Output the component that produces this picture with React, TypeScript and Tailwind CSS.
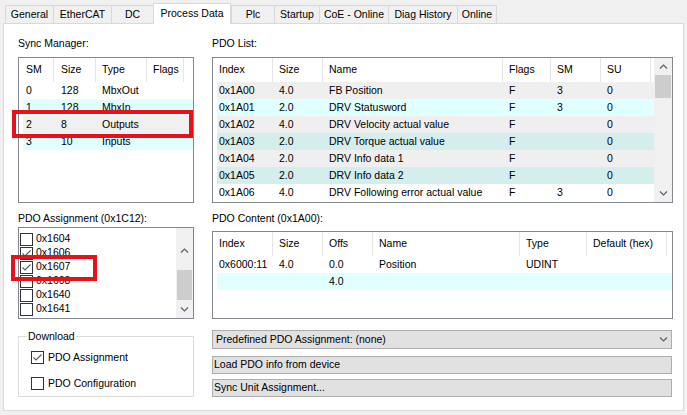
import React from 'react'

const tabs = [
  { label: 'General', w: 'w-[48px]' },
  { label: 'EtherCAT', w: 'w-[58px]' },
  { label: 'DC', w: 'w-[42px]' },
  { label: 'Process Data', w: 'w-[78px]', active: true },
  { label: 'Plc', w: 'w-[43px]' },
  { label: 'Startup', w: 'w-[45px]' },
  { label: 'CoE - Online', w: 'w-[69px]' },
  { label: 'Diag History', w: 'w-[69px]' },
  { label: 'Online', w: 'w-[40px]', last: true },
]

type Col = { label: string; w: string; pad: string }

const smCols: Col[] = [
  { label: 'SM', w: 'w-[31px]', pad: 'pl-[3px]' },
  { label: 'Size', w: 'w-[42px]', pad: 'pl-[7px]' },
  { label: 'Type', w: 'w-[51px]', pad: 'pl-[6px]' },
  { label: 'Flags', w: 'w-[37px]', pad: 'pl-[6px]' },
]

const smRows = [
  { cells: ['0', '128', 'MbxOut', ''], bg: 'bg-white' },
  { cells: ['1', '128', 'MbxIn', ''], bg: 'bg-[#e0ffff]' },
  { cells: ['2', '8', 'Outputs', ''], bg: 'bg-[#f0f0f0]' },
  { cells: ['3', '10', 'Inputs', ''], bg: 'bg-[#e0ffff]' },
]

const pdoCols: Col[] = [
  { label: 'Index', w: 'w-[56px]', pad: 'pl-[2px]' },
  { label: 'Size', w: 'w-[50px]', pad: 'pl-[6px]' },
  { label: 'Name', w: 'w-[180px]', pad: 'pl-[6px]' },
  { label: 'Flags', w: 'w-[48px]', pad: 'pl-[6px]' },
  { label: 'SM', w: 'w-[50px]', pad: 'pl-[6px]' },
  { label: 'SU', w: 'w-[50px]', pad: 'pl-[6px]' },
]

const pdoRows = [
  { cells: ['0x1A00', '4.0', 'FB Position', 'F', '3', '0'], bg: 'bg-[#efefef]' },
  { cells: ['0x1A01', '2.0', 'DRV Statusword', 'F', '3', '0'], bg: 'bg-[#e0ffff]' },
  { cells: ['0x1A02', '4.0', 'DRV Velocity actual value', 'F', '', '0'], bg: 'bg-[#efefef]' },
  { cells: ['0x1A03', '2.0', 'DRV Torque actual value', 'F', '', '0'], bg: 'bg-[#d4eded]' },
  { cells: ['0x1A04', '2.0', 'DRV Info data 1', 'F', '', '0'], bg: 'bg-[#efefef]' },
  { cells: ['0x1A05', '2.0', 'DRV Info data 2', 'F', '', '0'], bg: 'bg-[#d4eded]' },
  { cells: ['0x1A06', '4.0', 'DRV Following error actual value', 'F', '3', '0'], bg: 'bg-white' },
]

const contentCols: Col[] = [
  { label: 'Index', w: 'w-[56px]', pad: 'pl-[2px]' },
  { label: 'Size', w: 'w-[50px]', pad: 'pl-[6px]' },
  { label: 'Offs', w: 'w-[50px]', pad: 'pl-[6px]' },
  { label: 'Name', w: 'w-[147px]', pad: 'pl-[6px]' },
  { label: 'Type', w: 'w-[67px]', pad: 'pl-[6px]' },
  { label: 'Default (hex)', w: 'w-[80px]', pad: 'pl-[6px]' },
]

const contentRows = [
  { cells: ['0x6000:11', '4.0', '0.0', 'Position', 'UDINT', ''], bg: 'bg-white' },
  { cells: ['', '', '4.0', '', '', ''], bg: 'bg-[#e0ffff]' },
]

const assignments = [
  { name: '0x1604', checked: false },
  { name: '0x1606', checked: true },
  { name: '0x1607', checked: true },
  { name: '0x1608', checked: false },
  { name: '0x1640', checked: false },
  { name: '0x1641', checked: false },
]

function Chevron({ up }: { up?: boolean }) {
  return (
    <svg width="9" height="5" viewBox="0 0 9 5">
      <path d={up ? 'M1 4.5 L4.5 1 L8 4.5' : 'M1 0.5 L4.5 4 L8 0.5'} fill="none" stroke="#606060" strokeWidth="1.2" />
    </svg>
  )
}

function CheckBox({ checked }: { checked: boolean }) {
  return (
    <div className="w-[13px] h-[13px] shrink-0 border border-[#333333] bg-white flex items-center justify-center">
      {checked && (
        <svg width="11" height="11" viewBox="0 0 11 11">
          <path d="M1.5 5.5 L4 8 L9.5 2.5" fill="none" stroke="#5a5a5a" strokeWidth="1.1" />
        </svg>
      )}
    </div>
  )
}

function HeaderRow({ cols }: { cols: Col[] }) {
  return (
    <div className="h-[24px] flex bg-white">
      {cols.map((c) => (
        <div key={c.label} className={`${c.w} ${c.pad} h-full flex items-center border-r border-[#e5e5e5] whitespace-nowrap overflow-hidden`}>
          {c.label}
        </div>
      ))}
    </div>
  )
}

function DataRow({ cols, cells, bg }: { cols: Col[]; cells: string[]; bg: string }) {
  return (
    <div className={`h-[17px] flex ${bg}`}>
      {cols.map((c, i) => (
        <div key={c.label} className={`${c.w} ${c.pad} h-full flex items-center whitespace-nowrap overflow-hidden`}>
          {cells[i]}
        </div>
      ))}
    </div>
  )
}

export default function App() {
  return (
    <div className="relative w-[687px] h-[415px] overflow-hidden bg-[#f0f0f0] text-[10.5px] text-black font-['Liberation_Sans',Arial,sans-serif]">
      {/* tab strip */}
      <div className="h-[23px] flex items-end pl-[5px]">
        {tabs.map((t) =>
          t.active ? (
            <div key={t.label} className={`${t.w} h-[21px] -mb-[1px] relative z-10 bg-white border-t border-l border-r border-[#d9d9d9] flex items-center justify-center`}>
              {t.label}
            </div>
          ) : (
            <div key={t.label} className={`${t.w} h-[18px] pt-[1px] bg-[#f0f0f0] border-t border-l ${t.last ? 'border-r' : ''} border-[#d9d9d9] flex items-center justify-center whitespace-nowrap`}>
              {t.label}
            </div>
          )
        )}
      </div>

      {/* page */}
      <div className="ml-[3px] w-[681px] h-[388px] bg-white border border-[#d9d9d9] flex gap-[18px] pl-[14px] pt-[12px]">
        {/* left column */}
        <div className="w-[176px] flex flex-col">
          <p className="h-[14px] leading-[14px]">Sync Manager:</p>
          <div className="mt-[7px] h-[146px] border border-[#828790] bg-white">
            <div className="pl-[4px]">
              <HeaderRow cols={smCols} />
              {smRows.map((r, i) => (
                <DataRow key={i} cols={smCols} cells={r.cells} bg={r.bg} />
              ))}
            </div>
          </div>

          <p className="mt-[8px] h-[14px] leading-[14px]">PDO Assignment (0x1C12):</p>
          <div className="mt-[2px] h-[92px] border border-[#828790] bg-white flex">
            <div className="flex-1 pl-[1px] pt-[4px]">
              {assignments.map((a) => (
                <div key={a.name} className="h-[14px] flex items-center gap-[3px]">
                  <CheckBox checked={a.checked} />
                  <span>{a.name}</span>
                </div>
              ))}
            </div>
            <div className="w-[17px] h-full bg-[#f0f0f0] flex flex-col">
              <div className="h-[26px] flex items-end justify-center pb-[1px]">
                <Chevron up />
              </div>
              <div className="flex-1" />
              <div className="h-[30px] mx-[1px] bg-[#cdcdcd]" />
              <div className="h-[18px] flex items-center justify-center">
                <Chevron />
              </div>
            </div>
          </div>

          <div className="relative mt-[17px] h-[61px] border border-[#dcdcdc] pl-[12px] pt-[14px] flex flex-col gap-[13px]">
            <span className="absolute -top-[7px] left-[8px] bg-white px-[1px] leading-[13px]">Download</span>
            <div className="h-[13px] flex items-center gap-[4px]">
              <CheckBox checked />
              <span>PDO Assignment</span>
            </div>
            <div className="h-[13px] flex items-center gap-[4px]">
              <CheckBox checked={false} />
              <span>PDO Configuration</span>
            </div>
          </div>
        </div>

        {/* right column */}
        <div className="w-[461px] flex flex-col">
          <p className="h-[14px] leading-[14px]">PDO List:</p>
          <div className="mt-[7px] h-[146px] border border-[#828790] bg-white flex">
            <div className="flex-1 pl-[4px]">
              <HeaderRow cols={pdoCols} />
              {pdoRows.map((r, i) => (
                <DataRow key={i} cols={pdoCols} cells={r.cells} bg={r.bg} />
              ))}
            </div>
            <div className="w-[18px] h-full bg-[#f0f0f0] flex flex-col">
              <div className="h-[17px] flex items-center justify-center">
                <Chevron up />
              </div>
              <div className="h-[23px] mx-[1px] bg-[#cdcdcd]" />
              <div className="flex-1" />
              <div className="h-[17px] flex items-center justify-center">
                <Chevron />
              </div>
            </div>
          </div>

          <p className="mt-[8px] h-[14px] leading-[14px]">PDO Content (0x1A00):</p>
          <div className="mt-[6px] h-[88px] border border-[#828790] bg-white pl-[4px]">
            <HeaderRow cols={contentCols} />
            {contentRows.map((r, i) => (
              <DataRow key={i} cols={contentCols} cells={r.cells} bg={r.bg} />
            ))}
          </div>

          <div className="mt-[11px] w-[460px] h-[19px] bg-[#e1e1e1] border border-[#adadad] flex items-center justify-between pl-[3px] pr-[3px]">
            <span>Predefined PDO Assignment: (none)</span>
            <Chevron />
          </div>
          <div className="mt-[7px] w-[460px] h-[18px] bg-[#e1e1e1] border border-[#adadad] flex items-center pl-[1px]">
            Load PDO info from device
          </div>
          <div className="mt-[5px] w-[460px] h-[18px] bg-[#e1e1e1] border border-[#adadad] flex items-center pl-[1px]">
            Sync Unit Assignment...
          </div>
        </div>
      </div>

      {/* red highlight marks */}
      <div className="absolute left-[12px] top-[110px] w-[181px] h-[28px] border-4 border-[#e8111a]" />
      <div className="absolute left-[11px] top-[255px] w-[86px] h-[26px] border-4 border-[#e8111a]" />
    </div>
  )
}
